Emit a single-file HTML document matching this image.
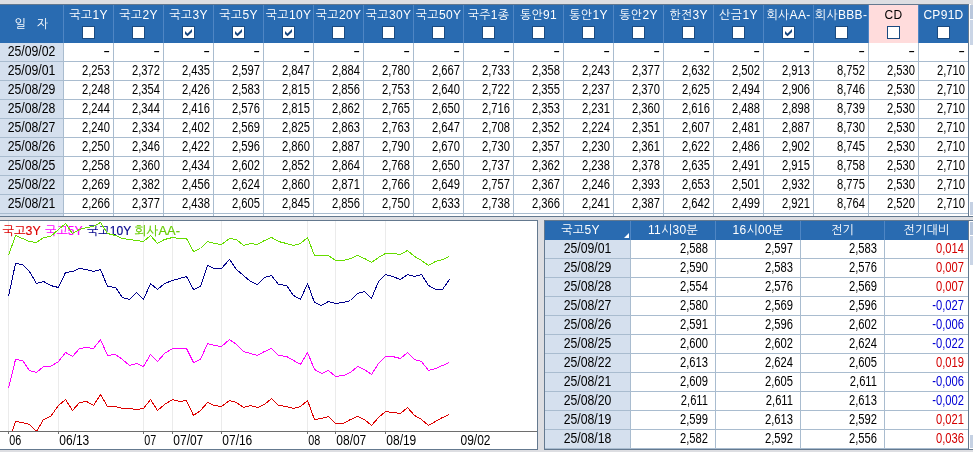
<!DOCTYPE html><html lang="ko"><head><meta charset="utf-8"><title>금리 추이</title><style>
html,body{margin:0;padding:0}body{width:973px;height:452px;overflow:hidden;background:#dddee2;position:relative;font-family:"Liberation Sans","NanumGothic","Noto Sans CJK KR",sans-serif;font-size:12px;color:#000}
div,span{position:absolute;box-sizing:border-box;white-space:nowrap}
.h{color:#fff;text-align:center;font-size:12px;line-height:14px;letter-spacing:.3px}
.n{text-align:right;font-size:14px;line-height:18px;transform:scaleX(.8);transform-origin:100% 50%;margin-top:-1px}
.d{text-align:center;font-size:14px;line-height:18px;transform:scaleX(.875);transform-origin:50% 50%;margin-top:-1px}
.n.m{transform:scaleX(1.45)}
.cb{width:13px;height:13px;background:#fff;border:1px solid #1a4a80}
.r{color:#d40000}.b{color:#0000d4}
svg{position:absolute;left:0;top:0}
</style></head><body>
<div style="left:0;top:0;width:973px;height:4px;background:#dddee2"></div>
<div style="left:0;top:4px;width:969px;height:1px;background:#64798f"></div>
<div style="left:0;top:5px;width:969px;height:211px;background:#fff"></div>
<div style="left:0;top:5px;width:969px;height:38px;background:#296bb1"></div>
<div style="left:0;top:43px;width:63px;height:173px;background:#d5e0ee"></div>
<div style="left:869px;top:5px;width:49px;height:38px;background:#ffdcdc"></div>
<div style="left:63px;top:5px;width:1px;height:38px;background:#4f86c4"></div>
<div style="left:113px;top:5px;width:1px;height:38px;background:#4f86c4"></div>
<div style="left:163px;top:5px;width:1px;height:38px;background:#4f86c4"></div>
<div style="left:213px;top:5px;width:1px;height:38px;background:#4f86c4"></div>
<div style="left:263px;top:5px;width:1px;height:38px;background:#4f86c4"></div>
<div style="left:313px;top:5px;width:1px;height:38px;background:#4f86c4"></div>
<div style="left:363px;top:5px;width:1px;height:38px;background:#4f86c4"></div>
<div style="left:413px;top:5px;width:1px;height:38px;background:#4f86c4"></div>
<div style="left:463px;top:5px;width:1px;height:38px;background:#4f86c4"></div>
<div style="left:513px;top:5px;width:1px;height:38px;background:#4f86c4"></div>
<div style="left:563px;top:5px;width:1px;height:38px;background:#4f86c4"></div>
<div style="left:613px;top:5px;width:1px;height:38px;background:#4f86c4"></div>
<div style="left:663px;top:5px;width:1px;height:38px;background:#4f86c4"></div>
<div style="left:713px;top:5px;width:1px;height:38px;background:#4f86c4"></div>
<div style="left:763px;top:5px;width:1px;height:38px;background:#4f86c4"></div>
<div style="left:813px;top:5px;width:1px;height:38px;background:#4f86c4"></div>
<div style="left:868px;top:5px;width:1px;height:38px;background:#4f86c4"></div>
<div style="left:918px;top:5px;width:1px;height:38px;background:#4f86c4"></div>
<div class="cb" style="left:82px;top:26px"></div>
<div class="cb" style="left:132px;top:26px"></div>
<div class="cb" style="left:182px;top:26px"><svg width="11" height="11" viewBox="0 0 11 11"><path d="M2 4 L4.5 6.5 L9 2 L9 5 L4.5 9.2 L2 7 Z" fill="#17467f"/></svg></div>
<div class="cb" style="left:232px;top:26px"><svg width="11" height="11" viewBox="0 0 11 11"><path d="M2 4 L4.5 6.5 L9 2 L9 5 L4.5 9.2 L2 7 Z" fill="#17467f"/></svg></div>
<div class="cb" style="left:282px;top:26px"><svg width="11" height="11" viewBox="0 0 11 11"><path d="M2 4 L4.5 6.5 L9 2 L9 5 L4.5 9.2 L2 7 Z" fill="#17467f"/></svg></div>
<div class="cb" style="left:332px;top:26px"></div>
<div class="cb" style="left:382px;top:26px"></div>
<div class="cb" style="left:432px;top:26px"></div>
<div class="cb" style="left:482px;top:26px"></div>
<div class="cb" style="left:532px;top:26px"></div>
<div class="cb" style="left:582px;top:26px"></div>
<div class="cb" style="left:632px;top:26px"></div>
<div class="cb" style="left:682px;top:26px"></div>
<div class="cb" style="left:732px;top:26px"></div>
<div class="cb" style="left:782px;top:26px"><svg width="11" height="11" viewBox="0 0 11 11"><path d="M2 4 L4.5 6.5 L9 2 L9 5 L4.5 9.2 L2 7 Z" fill="#17467f"/></svg></div>
<div class="cb" style="left:835px;top:26px"></div>
<div class="cb" style="left:887px;top:26px"></div>
<div class="cb" style="left:937px;top:26px"></div>
<div style="left:0;top:61px;width:969px;height:1px;background:#a9bccf"></div>
<div style="left:0;top:80px;width:969px;height:1px;background:#a9bccf"></div>
<div style="left:0;top:99px;width:969px;height:1px;background:#a9bccf"></div>
<div style="left:0;top:118px;width:969px;height:1px;background:#a9bccf"></div>
<div style="left:0;top:137px;width:969px;height:1px;background:#a9bccf"></div>
<div style="left:0;top:156px;width:969px;height:1px;background:#a9bccf"></div>
<div style="left:0;top:175px;width:969px;height:1px;background:#a9bccf"></div>
<div style="left:0;top:194px;width:969px;height:1px;background:#a9bccf"></div>
<div style="left:0;top:213px;width:969px;height:1px;background:#a9bccf"></div>
<div style="left:63px;top:43px;width:1px;height:173px;background:#a9bccf"></div>
<div style="left:113px;top:43px;width:1px;height:173px;background:#a9bccf"></div>
<div style="left:163px;top:43px;width:1px;height:173px;background:#a9bccf"></div>
<div style="left:213px;top:43px;width:1px;height:173px;background:#a9bccf"></div>
<div style="left:263px;top:43px;width:1px;height:173px;background:#a9bccf"></div>
<div style="left:313px;top:43px;width:1px;height:173px;background:#a9bccf"></div>
<div style="left:363px;top:43px;width:1px;height:173px;background:#a9bccf"></div>
<div style="left:413px;top:43px;width:1px;height:173px;background:#a9bccf"></div>
<div style="left:463px;top:43px;width:1px;height:173px;background:#a9bccf"></div>
<div style="left:513px;top:43px;width:1px;height:173px;background:#a9bccf"></div>
<div style="left:563px;top:43px;width:1px;height:173px;background:#a9bccf"></div>
<div style="left:613px;top:43px;width:1px;height:173px;background:#a9bccf"></div>
<div style="left:663px;top:43px;width:1px;height:173px;background:#a9bccf"></div>
<div style="left:713px;top:43px;width:1px;height:173px;background:#a9bccf"></div>
<div style="left:763px;top:43px;width:1px;height:173px;background:#a9bccf"></div>
<div style="left:813px;top:43px;width:1px;height:173px;background:#a9bccf"></div>
<div style="left:868px;top:43px;width:1px;height:173px;background:#a9bccf"></div>
<div style="left:918px;top:43px;width:1px;height:173px;background:#a9bccf"></div>
<div style="left:968px;top:43px;width:1px;height:173px;background:#a9bccf"></div>
<div style="left:968px;top:5px;width:1px;height:211px;background:#64798f"></div>
<div style="left:969px;top:4px;width:2px;height:212px;background:#fff"></div>
<div style="left:969px;top:5px;width:4px;height:211px;background:#fff"></div>
<div style="left:970px;top:5px;width:3px;height:14px;background:#b9c7dc"></div>
<div style="left:970px;top:20px;width:3px;height:25px;background:#cad5e6"></div>
<div style="left:970px;top:202px;width:3px;height:13px;background:#c5d1e3"></div>
<div style="left:0;top:216px;width:973px;height:1px;background:#64798f"></div>
<div style="left:0;top:217px;width:973px;height:4px;background:#dddee2"></div>
<div style="left:0;top:220px;width:538px;height:230px;background:#fff;border:1px solid #64798f;border-left:0"></div>
<svg width="538" height="452" viewBox="0 0 538 452" style="will-change:transform;font-family:'Liberation Sans','NanumGothic','Noto Sans CJK KR',sans-serif;font-size:12px">
<defs><clipPath id="cp"><rect x="0" y="221" width="537" height="211"/></clipPath></defs>
<line x1="8.5" y1="221" x2="8.5" y2="431" stroke="#ebebeb" stroke-width="1"/>
<line x1="58.5" y1="221" x2="58.5" y2="431" stroke="#ebebeb" stroke-width="1"/>
<line x1="143.5" y1="221" x2="143.5" y2="431" stroke="#ebebeb" stroke-width="1"/>
<line x1="172.5" y1="221" x2="172.5" y2="431" stroke="#ebebeb" stroke-width="1"/>
<line x1="221.5" y1="221" x2="221.5" y2="431" stroke="#ebebeb" stroke-width="1"/>
<line x1="307.5" y1="221" x2="307.5" y2="431" stroke="#ebebeb" stroke-width="1"/>
<line x1="335.5" y1="221" x2="335.5" y2="431" stroke="#ebebeb" stroke-width="1"/>
<line x1="385.5" y1="221" x2="385.5" y2="431" stroke="#ebebeb" stroke-width="1"/>
<text x="2.4" y="234.5" fill="#dd0000" stroke="#dd0000" stroke-width="0.15" textLength="38.3" lengthAdjust="spacingAndGlyphs">국고3Y</text>
<text x="45.1" y="234.5" fill="#ff00ff" stroke="#ff00ff" stroke-width="0.15" textLength="37.5" lengthAdjust="spacingAndGlyphs">국고5Y</text>
<text x="87.0" y="234.5" fill="#00008b" stroke="#00008b" stroke-width="0.15" textLength="44.2" lengthAdjust="spacingAndGlyphs">국고10Y</text>
<text x="134.2" y="234.5" fill="#66cc00" stroke="#66cc00" stroke-width="0.15" textLength="45.8" lengthAdjust="spacingAndGlyphs">회사AA-</text>
<g clip-path="url(#cp)" fill="none" stroke-width="1" stroke-linejoin="round" shape-rendering="crispEdges">
<polyline points="8.5,255.5 15.5,235.5 22.5,238.5 29.5,241.5 36.5,242.5 43.5,237.5 50.5,236.5 58.5,229.5 65.5,223.5 72.5,233.5 79.5,229.5 86.5,227.5 93.5,226.5 100.5,222.5 107.5,233.5 115.5,235.5 122.5,238.5 129.5,239.5 136.5,240.5 143.5,241.5 150.5,235.5 157.5,243.5 164.5,239.5 172.5,237.5 179.5,238.5 186.5,238.5 193.5,251.5 200.5,248.5 207.5,241.5 214.5,243.5 221.5,244.5 229.5,238.5 236.5,239.5 243.5,245.5 250.5,243.5 257.5,244.5 264.5,240.5 271.5,237.5 278.5,241.5 286.5,243.5 293.5,245.5 300.5,243.5 307.5,237.5 314.5,255.5 321.5,255.5 328.5,255.5 335.5,260.5 343.5,260.5 350.5,258.5 357.5,255.5 364.5,258.5 371.5,262.5 378.5,257.5 385.5,253.5 392.5,253.5 400.5,254.5 407.5,250.5 414.5,256.5 421.5,260.5 428.5,265.5 435.5,261.5 442.5,259.5 449.5,256.5" stroke="#66dd00"/>
<polyline points="8.5,296.5 15.5,263.5 22.5,264.5 29.5,271.5 36.5,283.5 43.5,281.5 50.5,285.5 58.5,287.5 65.5,272.5 72.5,271.5 79.5,268.5 86.5,269.5 93.5,271.5 100.5,269.5 107.5,286.5 115.5,287.5 122.5,297.5 129.5,299.5 136.5,292.5 143.5,299.5 150.5,283.5 157.5,289.5 164.5,283.5 172.5,280.5 179.5,278.5 186.5,276.5 193.5,289.5 200.5,286.5 207.5,265.5 214.5,268.5 221.5,268.5 229.5,259.5 236.5,269.5 243.5,275.5 250.5,281.5 257.5,284.5 264.5,277.5 271.5,275.5 278.5,284.5 286.5,285.5 293.5,295.5 300.5,299.5 307.5,283.5 314.5,302.5 321.5,305.5 328.5,301.5 335.5,303.5 343.5,302.5 350.5,300.5 357.5,293.5 364.5,291.5 371.5,298.5 378.5,281.5 385.5,274.5 392.5,276.5 400.5,279.5 407.5,274.5 414.5,276.5 421.5,274.5 428.5,285.5 435.5,289.5 442.5,289.5 449.5,279.5" stroke="#00008b"/>
<polyline points="8.5,388.5 15.5,359.5 22.5,360.5 29.5,370.5 36.5,372.5 43.5,366.5 50.5,366.5 58.5,361.5 65.5,352.5 72.5,356.5 79.5,348.5 86.5,347.5 93.5,348.5 100.5,339.5 107.5,355.5 115.5,354.5 122.5,359.5 129.5,365.5 136.5,363.5 143.5,366.5 150.5,354.5 157.5,361.5 164.5,353.5 172.5,348.5 179.5,348.5 186.5,348.5 193.5,362.5 200.5,359.5 207.5,343.5 214.5,345.5 221.5,346.5 229.5,339.5 236.5,344.5 243.5,351.5 250.5,353.5 257.5,355.5 264.5,351.5 271.5,348.5 278.5,355.5 286.5,356.5 293.5,360.5 300.5,364.5 307.5,352.5 314.5,369.5 321.5,373.5 328.5,370.5 335.5,376.5 343.5,375.5 350.5,372.5 357.5,366.5 364.5,369.5 371.5,374.5 378.5,363.5 385.5,356.5 392.5,356.5 400.5,358.5 407.5,352.5 414.5,359.5 421.5,361.5 428.5,370.5 435.5,368.5 442.5,365.5 449.5,362.5" stroke="#ff00ff"/>
<polyline points="8.5,442.5 15.5,421.5 22.5,422.5 29.5,424.5 36.5,431.5 43.5,419.5 50.5,416.5 58.5,405.5 65.5,399.5 72.5,410.5 79.5,402.5 86.5,401.5 93.5,405.5 100.5,394.5 107.5,406.5 115.5,406.5 122.5,408.5 129.5,408.5 136.5,409.5 143.5,408.5 150.5,399.5 157.5,410.5 164.5,404.5 172.5,399.5 179.5,401.5 186.5,400.5 193.5,415.5 200.5,410.5 207.5,402.5 214.5,405.5 221.5,406.5 229.5,400.5 236.5,402.5 243.5,407.5 250.5,405.5 257.5,407.5 264.5,404.5 271.5,398.5 278.5,405.5 286.5,406.5 293.5,408.5 300.5,406.5 307.5,400.5 314.5,419.5 321.5,418.5 328.5,416.5 335.5,423.5 343.5,423.5 350.5,419.5 357.5,416.5 364.5,419.5 371.5,425.5 378.5,417.5 385.5,411.5 392.5,412.5 400.5,413.5 407.5,407.5 414.5,415.5 421.5,419.5 428.5,425.5 435.5,421.5 442.5,417.5 449.5,414.5" stroke="#dd0000"/>
</g>
<line x1="0" y1="431.5" x2="537" y2="431.5" stroke="#6e6e6e" stroke-width="1"/>
<line x1="8.5" y1="431" x2="8.5" y2="434" stroke="#6e6e6e" stroke-width="1"/>
<text x="9.3" y="445" font-size="14" textLength="12" lengthAdjust="spacingAndGlyphs">06</text>
<line x1="58.5" y1="431" x2="58.5" y2="434" stroke="#6e6e6e" stroke-width="1"/>
<text x="59.3" y="445" font-size="14" textLength="30" lengthAdjust="spacingAndGlyphs">06/13</text>
<line x1="143.5" y1="431" x2="143.5" y2="434" stroke="#6e6e6e" stroke-width="1"/>
<text x="144.3" y="445" font-size="14" textLength="12" lengthAdjust="spacingAndGlyphs">07</text>
<line x1="172.5" y1="431" x2="172.5" y2="434" stroke="#6e6e6e" stroke-width="1"/>
<text x="173.3" y="445" font-size="14" textLength="30" lengthAdjust="spacingAndGlyphs">07/07</text>
<line x1="221.5" y1="431" x2="221.5" y2="434" stroke="#6e6e6e" stroke-width="1"/>
<text x="222.3" y="445" font-size="14" textLength="30" lengthAdjust="spacingAndGlyphs">07/16</text>
<line x1="307.5" y1="431" x2="307.5" y2="434" stroke="#6e6e6e" stroke-width="1"/>
<text x="308.3" y="445" font-size="14" textLength="12" lengthAdjust="spacingAndGlyphs">08</text>
<line x1="335.5" y1="431" x2="335.5" y2="434" stroke="#6e6e6e" stroke-width="1"/>
<text x="336.3" y="445" font-size="14" textLength="30" lengthAdjust="spacingAndGlyphs">08/07</text>
<line x1="385.5" y1="431" x2="385.5" y2="434" stroke="#6e6e6e" stroke-width="1"/>
<text x="386.3" y="445" font-size="14" textLength="30" lengthAdjust="spacingAndGlyphs">08/19</text>
<text x="460.5" y="445" font-size="14" textLength="30" lengthAdjust="spacingAndGlyphs">09/02</text>
</svg>
<div style="left:544px;top:220px;width:425px;height:230px;background:#fff;border:1px solid #64798f"></div>
<div style="left:545px;top:221px;width:423px;height:19px;background:#296bb1"></div>
<div style="left:545px;top:240px;width:85px;height:209px;background:#d5e0ee"></div>
<div style="left:630px;top:221px;width:1px;height:19px;background:#4f86c4"></div>
<div style="left:630px;top:240px;width:1px;height:209px;background:#a9bccf"></div>
<div style="left:715px;top:221px;width:1px;height:19px;background:#4f86c4"></div>
<div style="left:715px;top:240px;width:1px;height:209px;background:#a9bccf"></div>
<div style="left:800px;top:221px;width:1px;height:19px;background:#4f86c4"></div>
<div style="left:800px;top:240px;width:1px;height:209px;background:#a9bccf"></div>
<div style="left:884px;top:221px;width:1px;height:19px;background:#4f86c4"></div>
<div style="left:884px;top:240px;width:1px;height:209px;background:#a9bccf"></div>
<svg width="973" height="452"><path d="M629 233 L629 238 L624 238 Z" fill="#fff"/></svg>
<div style="left:545px;top:258px;width:423px;height:1px;background:#a9bccf"></div>
<div style="left:545px;top:277px;width:423px;height:1px;background:#a9bccf"></div>
<div style="left:545px;top:296px;width:423px;height:1px;background:#a9bccf"></div>
<div style="left:545px;top:315px;width:423px;height:1px;background:#a9bccf"></div>
<div style="left:545px;top:334px;width:423px;height:1px;background:#a9bccf"></div>
<div style="left:545px;top:353px;width:423px;height:1px;background:#a9bccf"></div>
<div style="left:545px;top:372px;width:423px;height:1px;background:#a9bccf"></div>
<div style="left:545px;top:391px;width:423px;height:1px;background:#a9bccf"></div>
<div style="left:545px;top:410px;width:423px;height:1px;background:#a9bccf"></div>
<div style="left:545px;top:429px;width:423px;height:1px;background:#a9bccf"></div>
<div style="left:545px;top:448px;width:423px;height:1px;background:#a9bccf"></div>
<div style="left:969px;top:221px;width:4px;height:228px;background:#fff"></div>
<div style="left:968px;top:220px;width:5px;height:1px;background:#64798f"></div>
<div style="left:968px;top:449px;width:5px;height:1px;background:#64798f"></div>
<div style="left:970px;top:222px;width:3px;height:13px;background:#b9c7dc"></div>
<div style="left:970px;top:236px;width:3px;height:29px;background:#cad5e6"></div>
<div style="left:970px;top:435px;width:3px;height:13px;background:#c5d1e3"></div>
<div id="t" style="left:0;top:0;width:973px;height:452px;will-change:transform">
<div class="h" style="left:0;top:17px;width:63px">일&nbsp;&nbsp;&nbsp;자</div>
<div class="h" style="left:61px;top:8px;width:55px">국고1Y</div>
<div class="h" style="left:111px;top:8px;width:55px">국고2Y</div>
<div class="h" style="left:161px;top:8px;width:55px">국고3Y</div>
<div class="h" style="left:211px;top:8px;width:55px">국고5Y</div>
<div class="h" style="left:261px;top:8px;width:55px">국고10Y</div>
<div class="h" style="left:311px;top:8px;width:55px">국고20Y</div>
<div class="h" style="left:361px;top:8px;width:55px">국고30Y</div>
<div class="h" style="left:411px;top:8px;width:55px">국고50Y</div>
<div class="h" style="left:461px;top:8px;width:55px">국주1종</div>
<div class="h" style="left:511px;top:8px;width:55px">통안91</div>
<div class="h" style="left:561px;top:8px;width:55px">통안1Y</div>
<div class="h" style="left:611px;top:8px;width:55px">통안2Y</div>
<div class="h" style="left:661px;top:8px;width:55px">한전3Y</div>
<div class="h" style="left:711px;top:8px;width:55px">산금1Y</div>
<div class="h" style="left:761px;top:8px;width:55px">회사AA-</div>
<div class="h" style="left:811px;top:8px;width:60px">회사BBB-</div>
<div class="h" style="color:#000;left:866px;top:8px;width:55px">CD</div>
<div class="h" style="left:916px;top:8px;width:55px">CP91D</div>
<div class="d" style="left:0;top:43px;width:63px">25/09/02</div>
<div class="n m" style="left:64px;top:43px;width:46px">-</div>
<div class="n m" style="left:114px;top:43px;width:46px">-</div>
<div class="n m" style="left:164px;top:43px;width:46px">-</div>
<div class="n m" style="left:214px;top:43px;width:46px">-</div>
<div class="n m" style="left:264px;top:43px;width:46px">-</div>
<div class="n m" style="left:314px;top:43px;width:46px">-</div>
<div class="n m" style="left:364px;top:43px;width:46px">-</div>
<div class="n m" style="left:414px;top:43px;width:46px">-</div>
<div class="n m" style="left:464px;top:43px;width:46px">-</div>
<div class="n m" style="left:514px;top:43px;width:46px">-</div>
<div class="n m" style="left:564px;top:43px;width:46px">-</div>
<div class="n m" style="left:614px;top:43px;width:46px">-</div>
<div class="n m" style="left:664px;top:43px;width:46px">-</div>
<div class="n m" style="left:714px;top:43px;width:46px">-</div>
<div class="n m" style="left:764px;top:43px;width:46px">-</div>
<div class="n m" style="left:814px;top:43px;width:51px">-</div>
<div class="n m" style="left:869px;top:43px;width:46px">-</div>
<div class="n m" style="left:919px;top:43px;width:46px">-</div>
<div class="d" style="left:0;top:62px;width:63px">25/09/01</div>
<div class="n" style="left:64px;top:62px;width:46px">2,253</div>
<div class="n" style="left:114px;top:62px;width:46px">2,372</div>
<div class="n" style="left:164px;top:62px;width:46px">2,435</div>
<div class="n" style="left:214px;top:62px;width:46px">2,597</div>
<div class="n" style="left:264px;top:62px;width:46px">2,847</div>
<div class="n" style="left:314px;top:62px;width:46px">2,884</div>
<div class="n" style="left:364px;top:62px;width:46px">2,780</div>
<div class="n" style="left:414px;top:62px;width:46px">2,667</div>
<div class="n" style="left:464px;top:62px;width:46px">2,733</div>
<div class="n" style="left:514px;top:62px;width:46px">2,358</div>
<div class="n" style="left:564px;top:62px;width:46px">2,243</div>
<div class="n" style="left:614px;top:62px;width:46px">2,377</div>
<div class="n" style="left:664px;top:62px;width:46px">2,632</div>
<div class="n" style="left:714px;top:62px;width:46px">2,502</div>
<div class="n" style="left:764px;top:62px;width:46px">2,913</div>
<div class="n" style="left:814px;top:62px;width:51px">8,752</div>
<div class="n" style="left:869px;top:62px;width:46px">2,530</div>
<div class="n" style="left:919px;top:62px;width:46px">2,710</div>
<div class="d" style="left:0;top:81px;width:63px">25/08/29</div>
<div class="n" style="left:64px;top:81px;width:46px">2,248</div>
<div class="n" style="left:114px;top:81px;width:46px">2,354</div>
<div class="n" style="left:164px;top:81px;width:46px">2,426</div>
<div class="n" style="left:214px;top:81px;width:46px">2,583</div>
<div class="n" style="left:264px;top:81px;width:46px">2,815</div>
<div class="n" style="left:314px;top:81px;width:46px">2,856</div>
<div class="n" style="left:364px;top:81px;width:46px">2,753</div>
<div class="n" style="left:414px;top:81px;width:46px">2,640</div>
<div class="n" style="left:464px;top:81px;width:46px">2,722</div>
<div class="n" style="left:514px;top:81px;width:46px">2,355</div>
<div class="n" style="left:564px;top:81px;width:46px">2,237</div>
<div class="n" style="left:614px;top:81px;width:46px">2,370</div>
<div class="n" style="left:664px;top:81px;width:46px">2,625</div>
<div class="n" style="left:714px;top:81px;width:46px">2,494</div>
<div class="n" style="left:764px;top:81px;width:46px">2,906</div>
<div class="n" style="left:814px;top:81px;width:51px">8,746</div>
<div class="n" style="left:869px;top:81px;width:46px">2,530</div>
<div class="n" style="left:919px;top:81px;width:46px">2,710</div>
<div class="d" style="left:0;top:100px;width:63px">25/08/28</div>
<div class="n" style="left:64px;top:100px;width:46px">2,244</div>
<div class="n" style="left:114px;top:100px;width:46px">2,344</div>
<div class="n" style="left:164px;top:100px;width:46px">2,416</div>
<div class="n" style="left:214px;top:100px;width:46px">2,576</div>
<div class="n" style="left:264px;top:100px;width:46px">2,815</div>
<div class="n" style="left:314px;top:100px;width:46px">2,862</div>
<div class="n" style="left:364px;top:100px;width:46px">2,765</div>
<div class="n" style="left:414px;top:100px;width:46px">2,650</div>
<div class="n" style="left:464px;top:100px;width:46px">2,716</div>
<div class="n" style="left:514px;top:100px;width:46px">2,353</div>
<div class="n" style="left:564px;top:100px;width:46px">2,231</div>
<div class="n" style="left:614px;top:100px;width:46px">2,360</div>
<div class="n" style="left:664px;top:100px;width:46px">2,616</div>
<div class="n" style="left:714px;top:100px;width:46px">2,488</div>
<div class="n" style="left:764px;top:100px;width:46px">2,898</div>
<div class="n" style="left:814px;top:100px;width:51px">8,739</div>
<div class="n" style="left:869px;top:100px;width:46px">2,530</div>
<div class="n" style="left:919px;top:100px;width:46px">2,710</div>
<div class="d" style="left:0;top:119px;width:63px">25/08/27</div>
<div class="n" style="left:64px;top:119px;width:46px">2,240</div>
<div class="n" style="left:114px;top:119px;width:46px">2,334</div>
<div class="n" style="left:164px;top:119px;width:46px">2,402</div>
<div class="n" style="left:214px;top:119px;width:46px">2,569</div>
<div class="n" style="left:264px;top:119px;width:46px">2,825</div>
<div class="n" style="left:314px;top:119px;width:46px">2,863</div>
<div class="n" style="left:364px;top:119px;width:46px">2,763</div>
<div class="n" style="left:414px;top:119px;width:46px">2,647</div>
<div class="n" style="left:464px;top:119px;width:46px">2,708</div>
<div class="n" style="left:514px;top:119px;width:46px">2,352</div>
<div class="n" style="left:564px;top:119px;width:46px">2,224</div>
<div class="n" style="left:614px;top:119px;width:46px">2,351</div>
<div class="n" style="left:664px;top:119px;width:46px">2,607</div>
<div class="n" style="left:714px;top:119px;width:46px">2,481</div>
<div class="n" style="left:764px;top:119px;width:46px">2,887</div>
<div class="n" style="left:814px;top:119px;width:51px">8,730</div>
<div class="n" style="left:869px;top:119px;width:46px">2,530</div>
<div class="n" style="left:919px;top:119px;width:46px">2,710</div>
<div class="d" style="left:0;top:138px;width:63px">25/08/26</div>
<div class="n" style="left:64px;top:138px;width:46px">2,250</div>
<div class="n" style="left:114px;top:138px;width:46px">2,346</div>
<div class="n" style="left:164px;top:138px;width:46px">2,422</div>
<div class="n" style="left:214px;top:138px;width:46px">2,596</div>
<div class="n" style="left:264px;top:138px;width:46px">2,860</div>
<div class="n" style="left:314px;top:138px;width:46px">2,887</div>
<div class="n" style="left:364px;top:138px;width:46px">2,790</div>
<div class="n" style="left:414px;top:138px;width:46px">2,670</div>
<div class="n" style="left:464px;top:138px;width:46px">2,730</div>
<div class="n" style="left:514px;top:138px;width:46px">2,357</div>
<div class="n" style="left:564px;top:138px;width:46px">2,230</div>
<div class="n" style="left:614px;top:138px;width:46px">2,361</div>
<div class="n" style="left:664px;top:138px;width:46px">2,622</div>
<div class="n" style="left:714px;top:138px;width:46px">2,486</div>
<div class="n" style="left:764px;top:138px;width:46px">2,902</div>
<div class="n" style="left:814px;top:138px;width:51px">8,745</div>
<div class="n" style="left:869px;top:138px;width:46px">2,530</div>
<div class="n" style="left:919px;top:138px;width:46px">2,710</div>
<div class="d" style="left:0;top:157px;width:63px">25/08/25</div>
<div class="n" style="left:64px;top:157px;width:46px">2,258</div>
<div class="n" style="left:114px;top:157px;width:46px">2,360</div>
<div class="n" style="left:164px;top:157px;width:46px">2,434</div>
<div class="n" style="left:214px;top:157px;width:46px">2,602</div>
<div class="n" style="left:264px;top:157px;width:46px">2,852</div>
<div class="n" style="left:314px;top:157px;width:46px">2,864</div>
<div class="n" style="left:364px;top:157px;width:46px">2,768</div>
<div class="n" style="left:414px;top:157px;width:46px">2,650</div>
<div class="n" style="left:464px;top:157px;width:46px">2,737</div>
<div class="n" style="left:514px;top:157px;width:46px">2,362</div>
<div class="n" style="left:564px;top:157px;width:46px">2,238</div>
<div class="n" style="left:614px;top:157px;width:46px">2,378</div>
<div class="n" style="left:664px;top:157px;width:46px">2,635</div>
<div class="n" style="left:714px;top:157px;width:46px">2,491</div>
<div class="n" style="left:764px;top:157px;width:46px">2,915</div>
<div class="n" style="left:814px;top:157px;width:51px">8,758</div>
<div class="n" style="left:869px;top:157px;width:46px">2,530</div>
<div class="n" style="left:919px;top:157px;width:46px">2,710</div>
<div class="d" style="left:0;top:176px;width:63px">25/08/22</div>
<div class="n" style="left:64px;top:176px;width:46px">2,269</div>
<div class="n" style="left:114px;top:176px;width:46px">2,382</div>
<div class="n" style="left:164px;top:176px;width:46px">2,456</div>
<div class="n" style="left:214px;top:176px;width:46px">2,624</div>
<div class="n" style="left:264px;top:176px;width:46px">2,860</div>
<div class="n" style="left:314px;top:176px;width:46px">2,871</div>
<div class="n" style="left:364px;top:176px;width:46px">2,766</div>
<div class="n" style="left:414px;top:176px;width:46px">2,649</div>
<div class="n" style="left:464px;top:176px;width:46px">2,757</div>
<div class="n" style="left:514px;top:176px;width:46px">2,367</div>
<div class="n" style="left:564px;top:176px;width:46px">2,246</div>
<div class="n" style="left:614px;top:176px;width:46px">2,393</div>
<div class="n" style="left:664px;top:176px;width:46px">2,653</div>
<div class="n" style="left:714px;top:176px;width:46px">2,501</div>
<div class="n" style="left:764px;top:176px;width:46px">2,932</div>
<div class="n" style="left:814px;top:176px;width:51px">8,775</div>
<div class="n" style="left:869px;top:176px;width:46px">2,530</div>
<div class="n" style="left:919px;top:176px;width:46px">2,710</div>
<div class="d" style="left:0;top:195px;width:63px">25/08/21</div>
<div class="n" style="left:64px;top:195px;width:46px">2,266</div>
<div class="n" style="left:114px;top:195px;width:46px">2,377</div>
<div class="n" style="left:164px;top:195px;width:46px">2,438</div>
<div class="n" style="left:214px;top:195px;width:46px">2,605</div>
<div class="n" style="left:264px;top:195px;width:46px">2,845</div>
<div class="n" style="left:314px;top:195px;width:46px">2,856</div>
<div class="n" style="left:364px;top:195px;width:46px">2,750</div>
<div class="n" style="left:414px;top:195px;width:46px">2,633</div>
<div class="n" style="left:464px;top:195px;width:46px">2,738</div>
<div class="n" style="left:514px;top:195px;width:46px">2,366</div>
<div class="n" style="left:564px;top:195px;width:46px">2,241</div>
<div class="n" style="left:614px;top:195px;width:46px">2,387</div>
<div class="n" style="left:664px;top:195px;width:46px">2,642</div>
<div class="n" style="left:714px;top:195px;width:46px">2,499</div>
<div class="n" style="left:764px;top:195px;width:46px">2,921</div>
<div class="n" style="left:814px;top:195px;width:51px">8,764</div>
<div class="n" style="left:869px;top:195px;width:46px">2,520</div>
<div class="n" style="left:919px;top:195px;width:46px">2,710</div>
<div class="h" style="left:538px;top:223px;width:85px">국고5Y</div>
<div class="h" style="left:631px;top:223px;width:84px">11시30분</div>
<div class="h" style="left:716px;top:223px;width:84px">16시00분</div>
<div class="h" style="left:801px;top:223px;width:83px">전기</div>
<div class="h" style="left:885px;top:223px;width:83px">전기대비</div>
<div class="d" style="left:545px;top:240px;width:85px">25/09/01</div>
<div class="n" style="left:631px;top:240px;width:77px">2,588</div>
<div class="n" style="left:716px;top:240px;width:77px">2,597</div>
<div class="n" style="left:801px;top:240px;width:76px">2,583</div>
<div class="n r" style="left:885px;top:240px;width:79px">0,014</div>
<div class="d" style="left:545px;top:259px;width:85px">25/08/29</div>
<div class="n" style="left:631px;top:259px;width:77px">2,590</div>
<div class="n" style="left:716px;top:259px;width:77px">2,583</div>
<div class="n" style="left:801px;top:259px;width:76px">2,576</div>
<div class="n r" style="left:885px;top:259px;width:79px">0,007</div>
<div class="d" style="left:545px;top:278px;width:85px">25/08/28</div>
<div class="n" style="left:631px;top:278px;width:77px">2,554</div>
<div class="n" style="left:716px;top:278px;width:77px">2,576</div>
<div class="n" style="left:801px;top:278px;width:76px">2,569</div>
<div class="n r" style="left:885px;top:278px;width:79px">0,007</div>
<div class="d" style="left:545px;top:297px;width:85px">25/08/27</div>
<div class="n" style="left:631px;top:297px;width:77px">2,580</div>
<div class="n" style="left:716px;top:297px;width:77px">2,569</div>
<div class="n" style="left:801px;top:297px;width:76px">2,596</div>
<div class="n b" style="left:885px;top:297px;width:79px">-0,027</div>
<div class="d" style="left:545px;top:316px;width:85px">25/08/26</div>
<div class="n" style="left:631px;top:316px;width:77px">2,591</div>
<div class="n" style="left:716px;top:316px;width:77px">2,596</div>
<div class="n" style="left:801px;top:316px;width:76px">2,602</div>
<div class="n b" style="left:885px;top:316px;width:79px">-0,006</div>
<div class="d" style="left:545px;top:335px;width:85px">25/08/25</div>
<div class="n" style="left:631px;top:335px;width:77px">2,600</div>
<div class="n" style="left:716px;top:335px;width:77px">2,602</div>
<div class="n" style="left:801px;top:335px;width:76px">2,624</div>
<div class="n b" style="left:885px;top:335px;width:79px">-0,022</div>
<div class="d" style="left:545px;top:354px;width:85px">25/08/22</div>
<div class="n" style="left:631px;top:354px;width:77px">2,613</div>
<div class="n" style="left:716px;top:354px;width:77px">2,624</div>
<div class="n" style="left:801px;top:354px;width:76px">2,605</div>
<div class="n r" style="left:885px;top:354px;width:79px">0,019</div>
<div class="d" style="left:545px;top:373px;width:85px">25/08/21</div>
<div class="n" style="left:631px;top:373px;width:77px">2,609</div>
<div class="n" style="left:716px;top:373px;width:77px">2,605</div>
<div class="n" style="left:801px;top:373px;width:76px">2,611</div>
<div class="n b" style="left:885px;top:373px;width:79px">-0,006</div>
<div class="d" style="left:545px;top:392px;width:85px">25/08/20</div>
<div class="n" style="left:631px;top:392px;width:77px">2,611</div>
<div class="n" style="left:716px;top:392px;width:77px">2,611</div>
<div class="n" style="left:801px;top:392px;width:76px">2,613</div>
<div class="n b" style="left:885px;top:392px;width:79px">-0,002</div>
<div class="d" style="left:545px;top:411px;width:85px">25/08/19</div>
<div class="n" style="left:631px;top:411px;width:77px">2,599</div>
<div class="n" style="left:716px;top:411px;width:77px">2,613</div>
<div class="n" style="left:801px;top:411px;width:76px">2,592</div>
<div class="n r" style="left:885px;top:411px;width:79px">0,021</div>
<div class="d" style="left:545px;top:430px;width:85px">25/08/18</div>
<div class="n" style="left:631px;top:430px;width:77px">2,582</div>
<div class="n" style="left:716px;top:430px;width:77px">2,592</div>
<div class="n" style="left:801px;top:430px;width:76px">2,556</div>
<div class="n r" style="left:885px;top:430px;width:79px">0,036</div>
</div>
</body></html>
